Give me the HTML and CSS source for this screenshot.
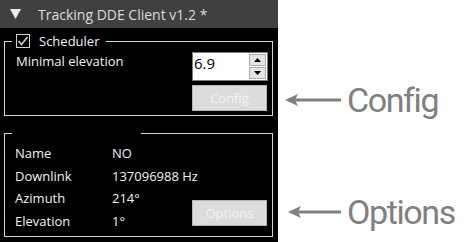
FILE: index.html
```html
<!DOCTYPE html>
<html lang="en">
<head>
  <meta charset="UTF-8" />
  <title>Tracking DDE Client</title>
  <link rel="stylesheet" href="styles.css">
</head>
<body>
  <div class="app">
    <div class="panel">
      <div class="titlebar">
        <svg class="caret" width="11" height="10" viewBox="0 0 11 10"><polygon points="0,0 11,0 5.5,10" fill="#ececec"/></svg>
        <span>Tracking DDE Client v1.2 *</span>
      </div>

      <!-- Scheduler -->
      <fieldset class="group sched">
        <legend>
          <span class="check">
            <svg width="14" height="14" viewBox="0 0 14 14"><polyline points="2.5,7 5.5,10.5 11.5,3" fill="none" stroke="#cfcfcf" stroke-width="1.6"/></svg>
          </span>
          Scheduler
        </legend>
        <div class="sched-row">
          <label>Minimal elevation</label>
          <div class="spin">
            <span class="spin-value">6.9</span>
            <div class="spin-btns">
              <span class="spin-btn"><svg width="7" height="4" viewBox="0 0 7 4"><polygon points="0,4 7,4 3.5,0" fill="#000"/></svg></span>
              <span class="spin-btn"><svg width="7" height="4" viewBox="0 0 7 4"><polygon points="0,0 7,0 3.5,4" fill="#000"/></svg></span>
            </div>
          </div>
        </div>
        <button class="btn">Config</button>
      </fieldset>

      <!-- Satellite info -->
      <fieldset class="group info">
        <legend class="blank"></legend>
        <div class="info-body">
          <div class="fields">
            <span>Name</span><span>NO</span>
            <span>Downlink</span><span>137096988 Hz</span>
            <span>Azimuth</span><span>214°</span>
            <span>Elevation</span><span>1°</span>
          </div>
          <button class="btn">Options</button>
        </div>
      </fieldset>
    </div>

    <div class="notes">
      <div class="note note-config">
        <svg width="56" height="12" viewBox="0 0 56 12"><line x1="6" y1="6" x2="56" y2="6" stroke="#808080" stroke-width="3"/><polygon points="0,6 13,0 10,6 13,12" fill="#808080"/></svg>
        <span>Config</span>
      </div>
      <div class="note note-options">
        <svg width="53" height="12" viewBox="0 0 53 12"><line x1="6" y1="6" x2="53" y2="6" stroke="#808080" stroke-width="3"/><polygon points="0,6 13,0 10,6 13,12" fill="#808080"/></svg>
        <span>Options</span>
      </div>
    </div>
  </div>
</body>
</html>
```

FILE: styles.css
```css
body {
  margin: 0;
  background: #fff;
  font-family: "Open Sans", "Noto Sans", sans-serif;
}

.app {
  display: flex;
  width: 466px;
  height: 242px;
  overflow: hidden;
}

.panel {
  width: 278px;
  height: 242px;
  flex-shrink: 0;
  background: #000;
  color: #f2f2f2;
  font-size: 13px;
  font-weight: 500;
}

.titlebar {
  height: 28px;
  background: #404040;
  display: flex;
  align-items: center;
  padding-left: 10px;
  color: #dcdcdc;
  font-size: 14px;
}

.caret {
  margin-right: 17px;
}

.group {
  margin: 0 0 0 4px;
  width: 269px;
  box-sizing: border-box;
  border: 1px solid #d4d4d4;
  padding: 0;
  min-width: 0;
}

.group legend {
  padding: 0;
  margin-left: 7px;
}

.sched {
  margin-top: 5px;
  height: 83px;
}

.sched legend {
  display: flex;
  align-items: center;
  gap: 9px;
  height: 16px;
  padding: 0 7px 0 4px;
  line-height: 16px;
}

.check {
  width: 14px;
  height: 14px;
  border: 1px solid #cfcfcf;
  box-sizing: border-box;
  display: flex;
}

.check svg {
  margin: -1px;
}

.sched-row {
  display: flex;
  justify-content: space-between;
  padding: 3px 4px 0 11px;
}

.spin {
  width: 76px;
  height: 29px;
  box-sizing: border-box;
  border: 1px solid #7a7a7a;
  background: #fff;
  display: flex;
  justify-content: space-between;
}

.spin-value {
  color: #000;
  font-size: 15px;
  line-height: 20px;
  padding-left: 1px;
}

.spin-btns {
  display: flex;
  flex-direction: column;
  gap: 1px;
  padding: 1px;
}

.spin-btn {
  width: 17px;
  height: 12px;
  box-sizing: border-box;
  background: #e4e4e4;
  border: 1px solid #adadad;
  display: flex;
  align-items: center;
  justify-content: center;
}

.btn {
  display: block;
  width: 75px;
  height: 26px;
  margin: 4px 0 0 187px;
  background: #dcdcdc;
  border: 1px solid #b4b4b4;
  color: #f4f4f4;
  font-family: inherit;
  font-size: 13px;
  padding: 0;
  flex: none;
}

.info {
  margin-top: 9px;
  height: 112px;
}

.info legend.blank {
  width: 129px;
  height: 16px;
}

.info-body {
  display: flex;
  align-items: flex-end;
  padding: 3px 0 0 10px;
}

.fields {
  flex: none;
  width: 177px;
  display: grid;
  grid-template-columns: 97px auto;
  row-gap: 4px;
  line-height: 18.5px;
  white-space: nowrap;
}

.info .btn {
  margin: 0 0 4px 0;
}

.notes {
  flex: 1;
  display: flex;
  flex-direction: column;
  color: #808080;
  font-family: Roboto, sans-serif;
  font-size: 34px;
  letter-spacing: -1.4px;
}

.note {
  display: flex;
  align-items: center;
  gap: 6px;
  height: 40px;
}

.note-config {
  margin: 80px 0 0 7px;
}

.note-options {
  margin: 72px 0 0 10px;
}
```
